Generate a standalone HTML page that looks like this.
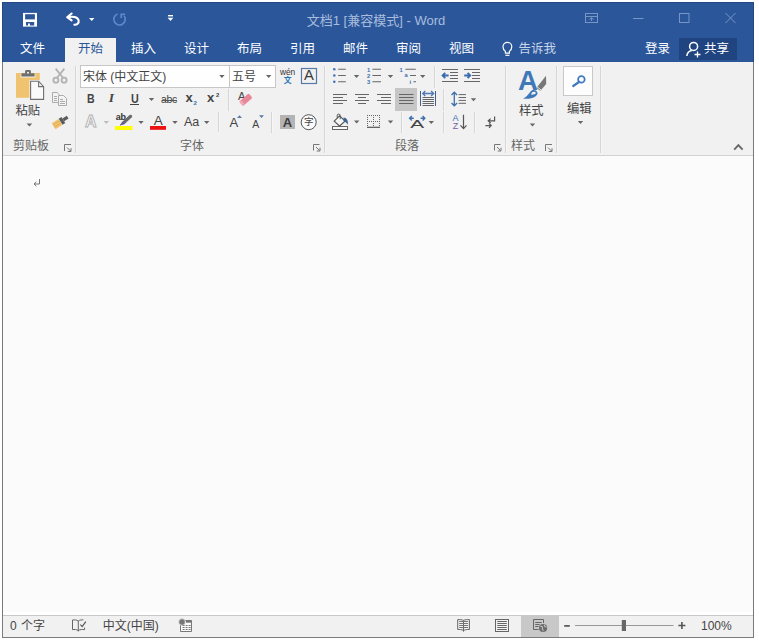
<!DOCTYPE html>
<html lang="zh-CN">
<head>
<meta charset="utf-8">
<title>文档1 [兼容模式] - Word</title>
<style>
html,body{margin:0;padding:0;}
body{width:759px;height:640px;background:#fff;position:relative;overflow:hidden;
  font-family:"Liberation Sans","Noto Sans CJK SC",sans-serif;font-size:12px;color:#444;}
.abs,.t{position:absolute;}
.t{white-space:nowrap;line-height:16px;height:16px;}
#win{position:absolute;left:2px;top:2px;width:750px;height:634px;border:1px solid #7a7a7a;background:#fbfbfb;}
#blue{position:absolute;left:2px;top:2px;width:752px;height:60px;background:#2b579a;border-top:1px solid #23477f;border-left:1px solid #23477f;border-right:1px solid #23477f;box-sizing:border-box;}
#ribbon{position:absolute;left:3px;top:62px;width:750px;height:93px;background:#f1f1f1;border-bottom:1px solid #d2d2d2;}
#status{position:absolute;left:3px;top:615px;width:750px;height:22px;background:#f1f1f1;border-top:1px solid #c8c8c8;box-sizing:border-box;}
.tab{position:absolute;top:40.200px;height:18px;line-height:18px;color:#fff;font-size:12.5px;white-space:nowrap;}
.sep{position:absolute;width:1px;background:#d6d6d6;box-shadow:1px 0 0 #f6f6f6;}
.gl{color:#666;}
svg{position:absolute;left:0;top:0;overflow:visible;}
</style>
</head>
<body>
<div id="win"></div>
<div id="blue"></div>

<!-- title -->
<div class="t" style="left:276px;width:200px;top:12.500px;text-align:center;color:#a9bcdd;font-size:13px;">文档1 [兼容模式] - Word</div>

<!-- tabs -->
<div class="abs" style="left:65px;top:38px;width:51px;height:24px;background:#f1f1f1;"></div>
<div class="tab" style="left:20px;">文件</div>
<div class="tab" style="left:78px;color:#2b579a;">开始</div>
<div class="tab" style="left:131px;">插入</div>
<div class="tab" style="left:184px;">设计</div>
<div class="tab" style="left:237px;">布局</div>
<div class="tab" style="left:290px;">引用</div>
<div class="tab" style="left:343px;">邮件</div>
<div class="tab" style="left:396px;">审阅</div>
<div class="tab" style="left:449px;">视图</div>
<div class="tab" style="left:518.500px;color:#c9d5ea;">告诉我</div>
<div class="tab" style="left:645px;">登录</div>
<div class="abs" style="left:679px;top:38px;width:57.500px;height:22px;background:#1f4480;"></div>
<div class="tab" style="left:704px;">共享</div>


<!-- title bar icons -->
<svg width="759" height="640" viewBox="0 0 759 640">
 <!-- save -->
 <rect x="23" y="12.900" width="14" height="13.700" fill="#fff"/>
 <rect x="25.1" y="14.2" width="9.8" height="5.2" fill="#2b579a"/>
 <path d="M26 22.100 h8.200 v3.400 h-4.300 v-1.900 h-1.900 v1.900 h-2 z" fill="#2b579a"/>
 <!-- undo -->
 <path d="M67.200 17.200 L71.600 13.500 M67.200 17.200 L71.600 20.400 M67.600 17.200 C72 16.200 77.800 16.400 78.600 20.400 C79.200 23.400 76.800 25 74.400 24.800" fill="none" stroke="#fff" stroke-width="2.100" stroke-linecap="round" stroke-linejoin="round"/>
 <path d="M89 18 h5.4 l-2.7 3 z" fill="#fff"/>
 <!-- redo (disabled) -->
 <path d="M117.550 13.940 A5.700 5.700 0 1 0 124.170 16.030" fill="none" stroke="#5c88cc" stroke-width="1.700"/>
 <path d="M121.200 18 V14.400 H125.200" fill="none" stroke="#5c88cc" stroke-width="1.700"/>
 <!-- customize -->
 <rect x="168" y="15" width="5" height="1.4" fill="#fff"/>
 <path d="M167.6 17.8 h5.8 l-2.9 3.2 z" fill="#fff"/>
 <!-- window controls -->
 <g fill="none" stroke="#7796c8" stroke-width="1">
  <rect x="585.5" y="13.5" width="12" height="9"/>
  <path d="M585.5 16.5 h12"/>
  <path d="M591.5 21 v-3.2 M589.5 19.6 l2 -2 l2 2"/>
  <path d="M633 18.500 h10.500"/>
  <rect x="679.500" y="13.500" width="9.500" height="9"/>
  <path d="M725.5 13 l10 10 M735.5 13 l-10 10"/>
 </g>
 <!-- tell me bulb -->
 <g fill="none" stroke="#fff" stroke-width="1.2">
  <path d="M505.400 53.200 v-1.800 c-1.600 -1.300 -2.400 -2.700 -2.400 -4.700 a4.400 4.400 0 0 1 8.800 0 c0 2 -0.800 3.400 -2.400 4.700 v1.800 z"/>
  <path d="M505.400 55.300 h4"/>
 </g>
 <!-- share person -->
 <g fill="none" stroke="#fff" stroke-width="1.5">
  <circle cx="693.600" cy="46.400" r="4"/>
  <path d="M686.8 56 c0.4 -3.2 2.4 -5 5 -5.4"/>
  <path d="M694.5 54.5 h6 M697.5 51.5 v6" stroke-width="1.3"/>
 </g>
</svg>

<!-- ribbon -->
<div id="ribbon"></div>


<!-- clipboard group -->
<div class="t" style="left:15.5px;top:102.500px;font-size:12.3px;">粘贴</div>
<div class="t gl" style="left:13px;top:137.5px;font-size:12px;">剪贴板</div>
<div class="sep" style="left:75px;top:66px;height:87px;"></div>
<svg width="759" height="640" viewBox="0 0 759 640">
 <!-- paste -->
 <rect x="16" y="73" width="23.8" height="24.8" fill="#efc36f"/>
 <path d="M20.6 77.4 v-3.2 h3.6 v-2.4 q0 -2.4 2.4 -2.4 h2.8 q2.4 0 2.4 2.4 v2.4 h3.6 v3.2 z" fill="#f6f1e6"/>
 <path d="M21.4 76.6 v-2.4 q0 -0.9 0.9 -0.9 h2.8 v-2 q0 -1.3 1.3 -1.3 h3.2 q1.3 0 1.3 1.3 v2 h2.8 q0.9 0 0.9 0.9 v2.4 z" fill="#6f6f6f"/>
 <circle cx="28" cy="72.8" r="1" fill="#f6f1e6"/>
 <path d="M29.4 80 h10 l5.4 5.6 v14.8 h-15.4 z" fill="#f1f1f1"/>
 <path d="M30.6 81.2 h8 l5 5.4 v12.8 h-13 z" fill="#fafafa" stroke="#6f6f6f" stroke-width="1.1" stroke-linejoin="miter"/>
 <path d="M38.6 81.2 v5.4 h5" fill="none" stroke="#6f6f6f" stroke-width="1.1"/>
 <path d="M26.6 123.4 h5.6 l-2.8 3 z" fill="#666"/>
 <!-- cut -->
 <g fill="none" stroke="#b2b2b2" stroke-width="1.800">
  <path d="M55.6 68.6 L63.2 78 M64.4 68.6 L56.8 78"/>
  <circle cx="55.9" cy="80.2" r="2.5"/>
  <circle cx="64.1" cy="80.2" r="2.5"/>
 </g>
 <!-- copy -->
 <g fill="#f3f3f3" stroke="#ababab" stroke-width="1">
  <path d="M52.5 92.5 h4.6 l2.4 2.4 v7.6 h-7 z"/>
  <path d="M58.5 95.5 h5 l3 3 v7 h-8 z"/>
 </g>
 <g stroke="#ababab" stroke-width="1" fill="none">
  <path d="M54 96.5 h3 M54 98.500 h3 M54 100.5 h3"/>
  <path d="M60 99.5 h3 M60 101.5 h5 M60 103.5 h5"/>
 </g>
 <!-- format painter -->
 <g transform="translate(60.200 121.800) rotate(-33) scale(0.920)">
  <rect x="-8.6" y="-3.6" width="8.6" height="7.6" fill="#efc36f"/>
  <path d="M-8.6 -1.2 h8.6 M-8.6 1.5 h8.6" stroke="#e3a94a" stroke-width="0.9"/>
  <rect x="0.4" y="-3.6" width="3.6" height="7.6" fill="#5c5c5c"/>
  <rect x="4" y="-1.6" width="5.6" height="3.4" fill="#5c5c5c"/>
 </g>
 <!-- launcher -->
 <path d="M64.5 151 v-6.500 h6.500" fill="none" stroke="#777" stroke-width="1"/>
 <path d="M67 147.500 l3.600 3.600 M71 148.200 v3.300 h-3.300" fill="none" stroke="#777" stroke-width="1"/>
</svg>


<!-- font group -->
<div class="abs" style="left:80px;top:65px;width:150px;height:23px;background:#fefefe;border:1px solid #c6c6c6;box-sizing:border-box;"></div>
<div class="abs" style="left:229px;top:65px;width:47px;height:23px;background:#fefefe;border:1px solid #c6c6c6;box-sizing:border-box;"></div>
<div class="t" style="left:83px;top:69.200px;font-size:12px;">宋体 (中文正文)</div>
<div class="t" style="left:232px;top:69.200px;font-size:12px;">五号</div>
<div class="t" style="left:280px;top:63.500px;font-size:8.400px;color:#333;letter-spacing:-0.100px;">wén</div>
<div class="t" style="left:283.700px;top:72.500px;font-size:7.800px;color:#2e75b6;font-weight:bold;">文</div>
<div class="t" style="left:304.100px;top:67px;font-size:14.800px;color:#3a3a3a;">A</div>
<div class="t" style="left:86.600px;top:90.800px;font-size:12px;font-weight:bold;transform:scaleX(0.880);transform-origin:0 0;">B</div>
<div class="t" style="left:108.800px;top:90.300px;font-size:13.500px;font-weight:bold;font-style:italic;font-family:'Liberation Serif',serif;">I</div>
<div class="t" style="left:130.500px;top:90.800px;font-size:12.500px;font-weight:bold;transform:scaleX(0.860);transform-origin:0 0;">U</div>
<div class="abs" style="left:130px;top:104px;width:9px;height:1px;background:#444;"></div>
<div class="t" style="left:161px;top:91px;font-size:10.500px;letter-spacing:-0.3px;">abc</div>
<div class="abs" style="left:161.500px;top:99.700px;width:15.800px;height:1px;background:#555;"></div>
<div class="t" style="left:185.500px;top:90.200px;font-size:13px;font-weight:bold;">x</div>
<div class="t" style="left:193.600px;top:95px;font-size:6px;color:#2e75b6;font-weight:bold;">2</div>
<div class="t" style="left:207px;top:90.200px;font-size:13px;font-weight:bold;">x</div>
<div class="t" style="left:216px;top:86.800px;font-size:6px;font-weight:bold;">2</div>
<div class="sep" style="left:228px;top:89px;height:22px;"></div>
<div class="t" style="left:238px;top:88px;font-size:11px;">A</div>
<div class="t" style="left:115.800px;top:109px;font-size:9px;font-weight:bold;letter-spacing:-0.3px;color:#333;">ab</div>
<div class="t" style="left:153.800px;top:112.500px;font-size:13.500px;">A</div>
<div class="t" style="left:184px;top:113.500px;font-size:12.500px;">Aa</div>
<div class="sep" style="left:218px;top:112px;height:20px;"></div>
<div class="t" style="left:229.500px;top:115px;font-size:13px;">A</div>
<div class="t" style="left:252.300px;top:116.200px;font-size:10.500px;">A</div>
<div class="sep" style="left:271px;top:112px;height:21px;"></div>
<div class="abs" style="left:280px;top:115px;width:14.500px;height:14px;background:#b4b4b4;"></div>
<div class="t" style="left:282.800px;top:114.700px;font-size:13px;font-weight:bold;color:#3c3c3c;">A</div>
<div class="t" style="left:304px;top:114px;font-size:9.500px;">字</div>
<div class="t gl" style="left:180px;top:137.500px;font-size:12px;">字体</div>
<div class="sep" style="left:324px;top:66px;height:87px;"></div>
<svg width="759" height="640" viewBox="0 0 759 640">
 <g fill="#666">
  <path d="M219.200 75 h5.400 l-2.700 3 z"/>
  <path d="M266 75 h5.400 l-2.700 3 z"/>
  <path d="M148.800 98 h5.400 l-2.700 3 z"/>
  <path d="M138.300 121 h5.400 l-2.700 3 z"/>
  <path d="M172.300 121 h5.400 l-2.700 3 z"/>
  <path d="M204 121 h5.400 l-2.700 3 z"/>
 </g>
 <path d="M103.600 121 h5.400 l-2.700 3 z" fill="#bdbdbd"/>
 <!-- char border -->
 <rect x="301.500" y="68.500" width="15" height="15" fill="none" stroke="#5a78a6" stroke-width="1.200"/>
 <!-- eraser -->
 <g transform="translate(245.800 99.700) rotate(-41)">
  <rect x="-6.300" y="-3" width="12.600" height="6" rx="1.400" fill="#e8879a"/>
  <rect x="-6.300" y="-3" width="2.600" height="6" rx="1" fill="#f0a8b6"/>
 </g>
 <!-- text effect A -->
 <text x="85" y="127" font-family="Liberation Sans, sans-serif" font-size="16" font-weight="bold" fill="#fdfdfd" stroke="#b0b0b0" stroke-width="0.900">A</text>
 <!-- highlight -->
 <rect x="115" y="126" width="17.500" height="4" fill="#ffff00"/>
 <path d="M119.800 125.600 L122.600 121.400 L129.600 115 Q131 114.200 132 115.400 Q132.600 116.600 131.600 117.600 L124.600 124 Z" fill="#6a6a6a"/>
 <path d="M119.800 125.600 L122.600 121.400 L124.600 124 Z" fill="#6a5a9a"/>
 <!-- font color -->
 <rect x="150" y="126" width="16" height="3.800" fill="#ee1111"/>
 <!-- grow / shrink -->
 <path d="M237 118 h5 l-2.500 -2.800 z" fill="#5a78a6"/>
 <path d="M259 115.200 h5 l-2.500 2.800 z" fill="#5a78a6"/>
 <!-- enclosed char -->
 <circle cx="308.700" cy="122.200" r="7.500" fill="#fbfbfb" stroke="#555" stroke-width="1"/>
 <!-- launcher -->
 <path d="M313.500 150.500 v-6 h6" fill="none" stroke="#777" stroke-width="1"/>
 <path d="M316 147 l3.600 3.600 M320 147.700 v3.300 h-3.300" fill="none" stroke="#777" stroke-width="1"/>
</svg>
<div class="t" style="left:304px;top:114px;font-size:9.500px;">字</div>


<!-- paragraph group -->
<div class="abs" style="left:395px;top:88px;width:22px;height:23px;background:#c6c6c6;"></div>
<div class="t gl" style="left:395px;top:137.500px;font-size:12px;">段落</div>
<div class="sep" style="left:434px;top:66px;height:22px;"></div>
<div class="sep" style="left:443px;top:89px;height:22px;"></div>
<div class="sep" style="left:401px;top:112px;height:21px;"></div>
<div class="sep" style="left:443px;top:112px;height:21px;"></div>
<div class="sep" style="left:474px;top:112px;height:21px;"></div>
<div class="sep" style="left:505px;top:66px;height:87px;"></div>
<div class="t" style="left:367px;top:61.500px;font-size:5.800px;color:#3f6fae;font-weight:bold;">1</div>
<div class="t" style="left:367px;top:67.700px;font-size:5.800px;color:#3f6fae;font-weight:bold;">2</div>
<div class="t" style="left:367px;top:73.900px;font-size:5.800px;color:#3f6fae;font-weight:bold;">3</div>
<div class="t" style="left:399.500px;top:61.500px;font-size:5.800px;color:#3f6fae;font-weight:bold;">1</div>
<div class="t" style="left:404.500px;top:67.200px;font-size:5.800px;color:#3f6fae;font-weight:bold;">a</div>
<div class="t" style="left:409.500px;top:73.900px;font-size:5.800px;color:#3f6fae;font-weight:bold;">i</div>
<div class="t" style="left:452.500px;top:109.500px;font-size:9px;color:#3f6fae;">A</div>
<div class="t" style="left:452.800px;top:117.700px;font-size:9px;color:#7a5ca0;">Z</div>

<svg width="759" height="640" viewBox="0 0 759 640">
 <g fill="#666">
  <path d="M353.800 75 h5.400 l-2.700 3 z"/>
  <path d="M387.800 75 h5.400 l-2.700 3 z"/>
  <path d="M420 75 h5.400 l-2.700 3 z"/>
  <path d="M470.800 98.200 h5.400 l-2.700 3 z"/>
  <path d="M354 120.600 h5.400 l-2.700 3 z"/>
  <path d="M387.800 120.600 h5.400 l-2.700 3 z"/>
  <path d="M428.600 121 h5.400 l-2.700 3 z"/>
 </g>
 <!-- bullets -->
 <g fill="#4477b6">
  <circle cx="334.300" cy="69.300" r="1.300"/><circle cx="334.300" cy="75.500" r="1.300"/><circle cx="334.300" cy="81.700" r="1.300"/>
 </g>
 <path d="M338.2 69.3 H345.8 M338.2 75.5 H345.8 M338.2 81.7 H345.8" stroke="#666" stroke-width="1.100"/>
 <!-- numbering -->
 <path d="M372.4 69.3 H381 M372.4 75.5 H381 M372.4 81.7 H381" stroke="#666" stroke-width="1.100"/>
 <!-- multilevel -->
 <path d="M405.400 69.300 H415.800 M410 75.500 H416 M413.400 81.700 H416" stroke="#666" stroke-width="1.100"/>
 <!-- indent -->
 <path d="M442 69.5 H458 M442 81.5 H458 M450 72.5 H458 M450 75.5 H458 M450 78.5 H458" stroke="#666" stroke-width="1"/>
 <path d="M442.800 75.500 H448.600 M445.200 72.900 L442.600 75.500 L445.200 78.100" stroke="#3b6cb0" stroke-width="1.900" fill="none"/>
 <path d="M464 69.5 H480 M464 81.5 H480 M472 72.5 H480 M472 75.5 H480 M472 78.5 H480" stroke="#666" stroke-width="1"/>
 <path d="M464.200 75.500 H470 M467.600 72.900 L470.200 75.500 L467.600 78.100" stroke="#3b6cb0" stroke-width="1.900" fill="none"/>
 <!-- alignment -->
 <path d="M333 94.5 H347 M333 100.5 H347 M333 97.5 H343 M333 103.5 H343" stroke="#666" stroke-width="1"/>
 <path d="M355 94.5 H369 M355 100.5 H369 M358 97.5 H366 M358 103.5 H366" stroke="#666" stroke-width="1"/>
 <path d="M377 94.5 H391 M377 100.5 H391 M381 97.5 H391 M381 103.5 H391" stroke="#666" stroke-width="1"/>
 <path d="M399 94.5 H413.5 M399 97.5 H413.5 M399 100.5 H413.5 M399 103.5 H413.5" stroke="#666" stroke-width="1.100"/>
 <!-- distributed -->
 <path d="M420.500 91 V106 M435.500 91 V106" stroke="#44608c" stroke-width="1"/>
 <path d="M422.800 93.500 H433.600 M425.300 91.100 L422.800 93.500 L425.300 95.900 M431.100 91.100 L433.600 93.500 L431.100 95.900" stroke="#4f7ab4" stroke-width="1.400" fill="none"/>
 <path d="M422.500 97.500 H434 M422.500 99.500 H434 M422.500 101.500 H434 M422.500 103.500 H434 M422.500 105.500 H434" stroke="#666" stroke-width="1"/>
 <!-- line spacing -->
 <path d="M454.300 92.400 V105.600 M451.500 95 L454.300 92.200 L457.100 95 M451.500 103 L454.300 105.800 L457.100 103" stroke="#3f6fae" stroke-width="1.300" fill="none"/>
 <path d="M458.6 94.6 H466 M458.6 97.5 H466 M458.6 100.4 H466 M458.6 103.3 H466" stroke="#666" stroke-width="1"/>
 <!-- shading -->
 <rect x="332.500" y="126.500" width="15" height="3" fill="#fafafa" stroke="#666" stroke-width="1"/>
 <path d="M334.200 121.200 L339.600 115.800 L345 121.200 L339.600 126 Z" fill="#f6f6f6" stroke="#555" stroke-width="1.100"/>
 <path d="M340.200 119.200 V115.600 a1.500 1.500 0 0 0 -3 0 V117.600" fill="none" stroke="#555" stroke-width="1"/>
 <path d="M343.400 117.400 c3.200 0.200 5 2.600 4.400 7.400 c-1.200 -2.200 -2.400 -3.200 -4 -3.400 z" fill="#3c6494"/>
 <!-- borders -->
 <g stroke="#666" stroke-width="1" stroke-dasharray="1 1" fill="none">
  <path d="M367 115.500 H380 M367 121.500 H380 M367.500 115 V127 M373.500 115 V127 M379.500 115 V127"/>
 </g>
 <path d="M367 127.300 H380" stroke="#555" stroke-width="1.200"/>
 <text transform="translate(410.200 128) scale(1.86 1)" font-family="Liberation Sans, sans-serif" font-size="11.200" fill="#444">A</text>
 <!-- asian layout arrows -->
 <path d="M409.600 118.200 H413.800 M411.800 116 L409.600 118.200 L411.800 120.400 M420.600 118.200 H424.800 M422.600 116 L424.800 118.200 L422.600 120.400" stroke="#3f6fae" stroke-width="1.400" fill="none"/>
 <!-- sort arrow -->
 <path d="M463.500 114.800 V128.400 M460.500 125.400 L463.500 128.600 L466.500 125.400" stroke="#555" stroke-width="1.200" fill="none"/>
 <!-- show marks -->
 <path d="M494.600 116.400 V120.800 H488.400 M490.600 118.600 L488.200 120.800 L490.600 123" stroke="#555" stroke-width="1.200" fill="none"/>
 <path d="M485.400 125.600 H491 M489 123.400 L491.200 125.600 L489 127.800" stroke="#555" stroke-width="1.200" fill="none"/>
 <!-- launcher -->
 <path d="M494.500 150.500 v-6 h6" fill="none" stroke="#777" stroke-width="1"/>
 <path d="M497 147 l3.600 3.600 M501 147.700 v3.300 h-3.300" fill="none" stroke="#777" stroke-width="1"/>
</svg>

<!-- styles group -->
<div class="t" style="left:519px;top:102.500px;font-size:12.300px;">样式</div>
<div class="t gl" style="left:511px;top:137.500px;font-size:12px;">样式</div>
<div class="sep" style="left:556px;top:66px;height:87px;"></div>
<svg width="759" height="640" viewBox="0 0 759 640">
 <text x="517.900" y="90.200" font-family="Liberation Sans, sans-serif" font-size="27.600" font-weight="bold" fill="#3e78b8">A</text>
 <path d="M546 75.800 L546.200 84 L540.400 90.800 L536.400 88 Z" fill="#777"/>
 <path d="M537 86.800 L541.200 90" stroke="#f1f1f1" stroke-width="0.900"/>
 <path d="M530.600 91.400 C533 89 537 90 537.600 93.400 C536.400 97.600 530 99 523 98.800 C526.600 97 528.400 93.800 530.600 91.400 Z" fill="#3e78b8"/>
 <path d="M532 92.600 C533.400 91.400 535.400 91.600 535.800 93.200 C534.600 94.400 532.800 94.800 531 94.600 Z" fill="#f4f4f4"/>
 <path d="M529.800 123.400 h5.400 l-2.700 3 z" fill="#666"/>
 <path d="M545.500 151 v-6.500 h6.500" fill="none" stroke="#777" stroke-width="1"/>
 <path d="M548 147.500 l3.600 3.600 M552 148.200 v3.300 h-3.300" fill="none" stroke="#777" stroke-width="1"/>
</svg>

<!-- editing group -->
<div class="abs" style="left:563px;top:66px;width:30px;height:30px;background:#fdfdfd;border:1px solid #c8c8c8;box-sizing:border-box;"></div>
<div class="t" style="left:567px;top:100.500px;font-size:12.300px;">编辑</div>
<div class="sep" style="left:600px;top:66px;height:87px;"></div>
<svg width="759" height="640" viewBox="0 0 759 640">
 <circle cx="581.400" cy="79.400" r="3.300" fill="none" stroke="#3f7abf" stroke-width="1.700"/>
 <path d="M579 82 L573.200 86" stroke="#3f7abf" stroke-width="2.200" stroke-linecap="round"/>
 <path d="M577.800 121 h5.400 l-2.700 3 z" fill="#666"/>
 <path d="M734.200 149.600 L738.400 145.200 L742.600 149.600" fill="none" stroke="#666" stroke-width="1.900"/>
</svg>


<!-- document paragraph mark -->
<svg width="759" height="640" viewBox="0 0 759 640">
 <path d="M39.500 179 V184 H34 M36.400 181.800 L34 184 L36.400 186.200" fill="none" stroke="#777" stroke-width="1"/>
</svg>

<!-- status bar -->
<div class="abs" style="left:3px;top:612px;width:750px;height:3px;background:#fff;"></div>
<div id="status"></div>


<div class="abs" style="left:521px;top:615px;width:38px;height:22px;background:#c8c8c8;"></div>
<div class="t" style="left:10px;top:618px;font-size:12px;word-spacing:1px;">0 个字</div>
<div class="t" style="left:102.800px;top:618px;font-size:12px;">中文(中国)</div>
<div class="t" style="left:701px;top:617.500px;font-size:12px;">100%</div>
<svg width="759" height="640" viewBox="0 0 759 640">
 <!-- proofing book -->
 <path d="M78.300 621 C76.500 619.800 74.500 619.800 72.500 620 V629.600 C74.500 629.400 76.500 629.400 78.300 630.600 C80 629.400 82 629.400 84.600 629.600 V627.600 M78.300 621 V631.400 M78.300 621 C80 619.800 81.800 619.800 83.400 619.900" fill="none" stroke="#666" stroke-width="1"/>
 <path d="M80.400 624.600 L82.200 626.600 L85.800 621.600" fill="none" stroke="#555" stroke-width="1.200"/>
 <!-- macro -->
 <path d="M180.500 621 V631.500 H191.500 V620.500 H182 Z" fill="#fafafa" stroke="#777" stroke-width="1"/>
 <rect x="186" y="620.500" width="5.500" height="2.200" fill="#777"/>
 <circle cx="182" cy="622" r="3.400" fill="#777" stroke="#f1f1f1" stroke-width="0.800"/>
 <path d="M182.6 625.5 H184.6 M182.6 627.5 H184.6 M182.6 629.5 H184.6 M185.6 625.5 H187.6 M185.6 627.5 H187.6 M185.6 629.5 H187.6 M188.6 625.5 H190.6 M188.6 627.5 H190.6 M188.6 629.5 H190.6" stroke="#777" stroke-width="1"/>
 <!-- read mode -->
 <path d="M463.500 620.400 C461.800 619.600 459.800 619.500 457.700 619.600 V629.500 C459.800 629.400 461.800 629.500 463.500 630.600 C465.200 629.500 467.200 629.400 469.400 629.500 V619.600 C467.200 619.500 465.200 619.600 463.500 620.400 V631.600" fill="none" stroke="#666" stroke-width="1"/>
 <path d="M459.2 621.5 H468 M459.2 623.5 H468 M459.2 625.5 H468 M459.2 627.5 H468" stroke="#777" stroke-width="1"/>
 <!-- print layout -->
 <rect x="495.500" y="619.500" width="13" height="12" fill="none" stroke="#666" stroke-width="1"/>
 <path d="M497.3 621.5 H506.8 M497.3 623.5 H506.8 M497.3 625.5 H506.8 M497.3 627.5 H506.8 M497.3 629.5 H506.8" stroke="#666" stroke-width="1"/>
 <!-- web layout -->
 <path d="M538.600 629.500 H533.500 V619.500 H543.500 V623" fill="none" stroke="#666" stroke-width="1"/>
 <path d="M535.200 622.500 H541.800 M535.200 624.500 H539.600 M535.200 626.500 H538.600" stroke="#666" stroke-width="1"/>
 <circle cx="543.100" cy="628" r="4.100" fill="#6c6c6c"/>
 <path d="M540.400 626.600 c1.400 -0.600 2.400 0.200 2 1.400 c-0.400 1.200 1 1.400 0.600 3 M544.600 624.800 c-0.800 1.400 0.600 2 2 2.200" fill="none" stroke="#c2c2c2" stroke-width="1.100"/>
 <!-- zoom slider -->
 <path d="M564.200 625.900 H569.800" stroke="#555" stroke-width="1.700"/>
 <path d="M575 625.500 H673.500" stroke="#999" stroke-width="1"/>
 <rect x="621.800" y="620" width="4.200" height="11" fill="#666"/>
 <path d="M678.400 625.500 H685.400 M681.900 622 V629" stroke="#555" stroke-width="1.600"/>
</svg>

</body>
</html>
